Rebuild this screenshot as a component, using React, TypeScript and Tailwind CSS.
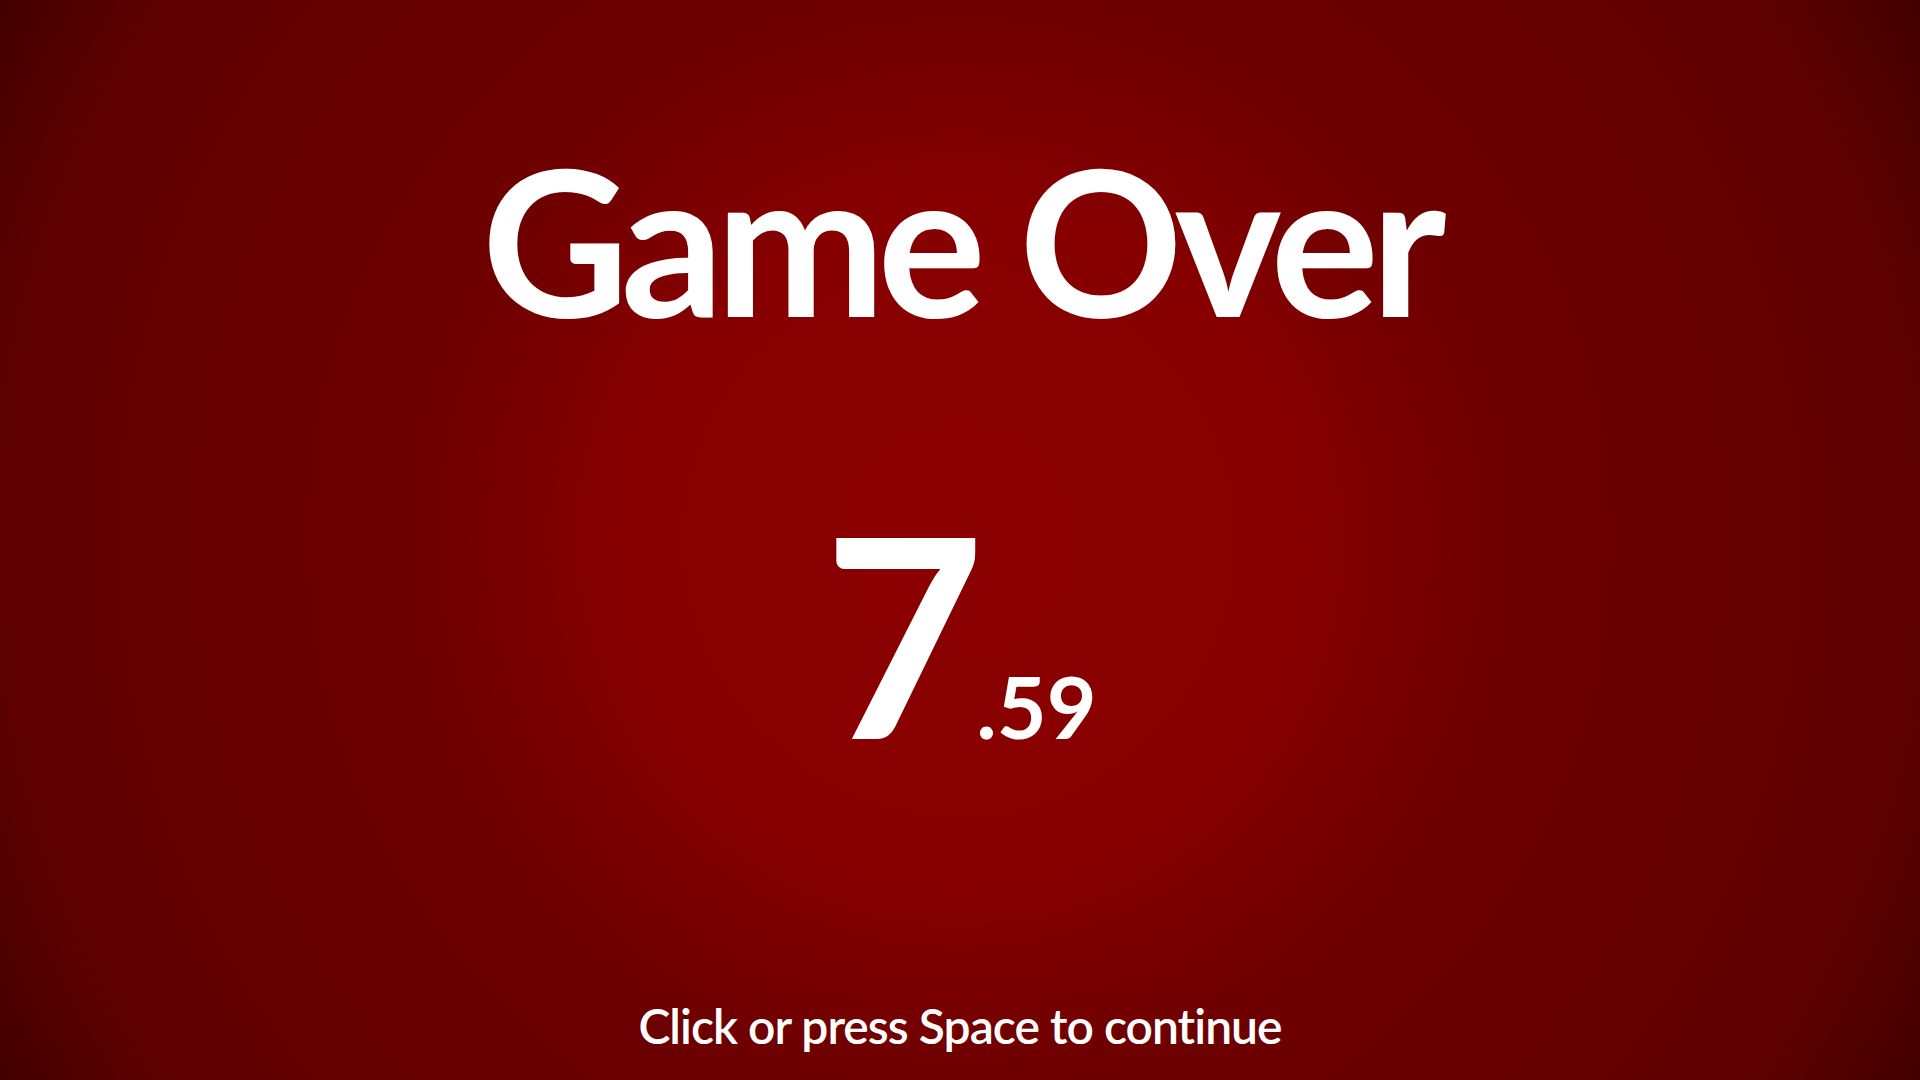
export default function App() {
  return (
    <div
      className="w-full h-screen overflow-hidden flex flex-col items-center text-white select-none bg-[radial-gradient(circle_at_center,#8b0000_0%,#870000_30%,#6e0000_49%,#5e0000_87%,#420000_100%)]"
      style={{ fontFamily: "Lato, 'Noto Sans', sans-serif" }}
    >
      <h1 className="mt-[137px] text-[203px] leading-none font-bold tracking-[-0.04em]">
        Game Over
      </h1>
      <div className="mt-[153px] flex items-baseline leading-none font-bold">
        <span className="text-[278px] tracking-[-0.03em]">7</span>
        <span className="text-[86px]">.59</span>
      </div>
      <p className="mt-auto mb-[30px] text-[48px] leading-none font-semibold tracking-[-0.02em]">
        Click or press Space to continue
      </p>
    </div>
  );
}
